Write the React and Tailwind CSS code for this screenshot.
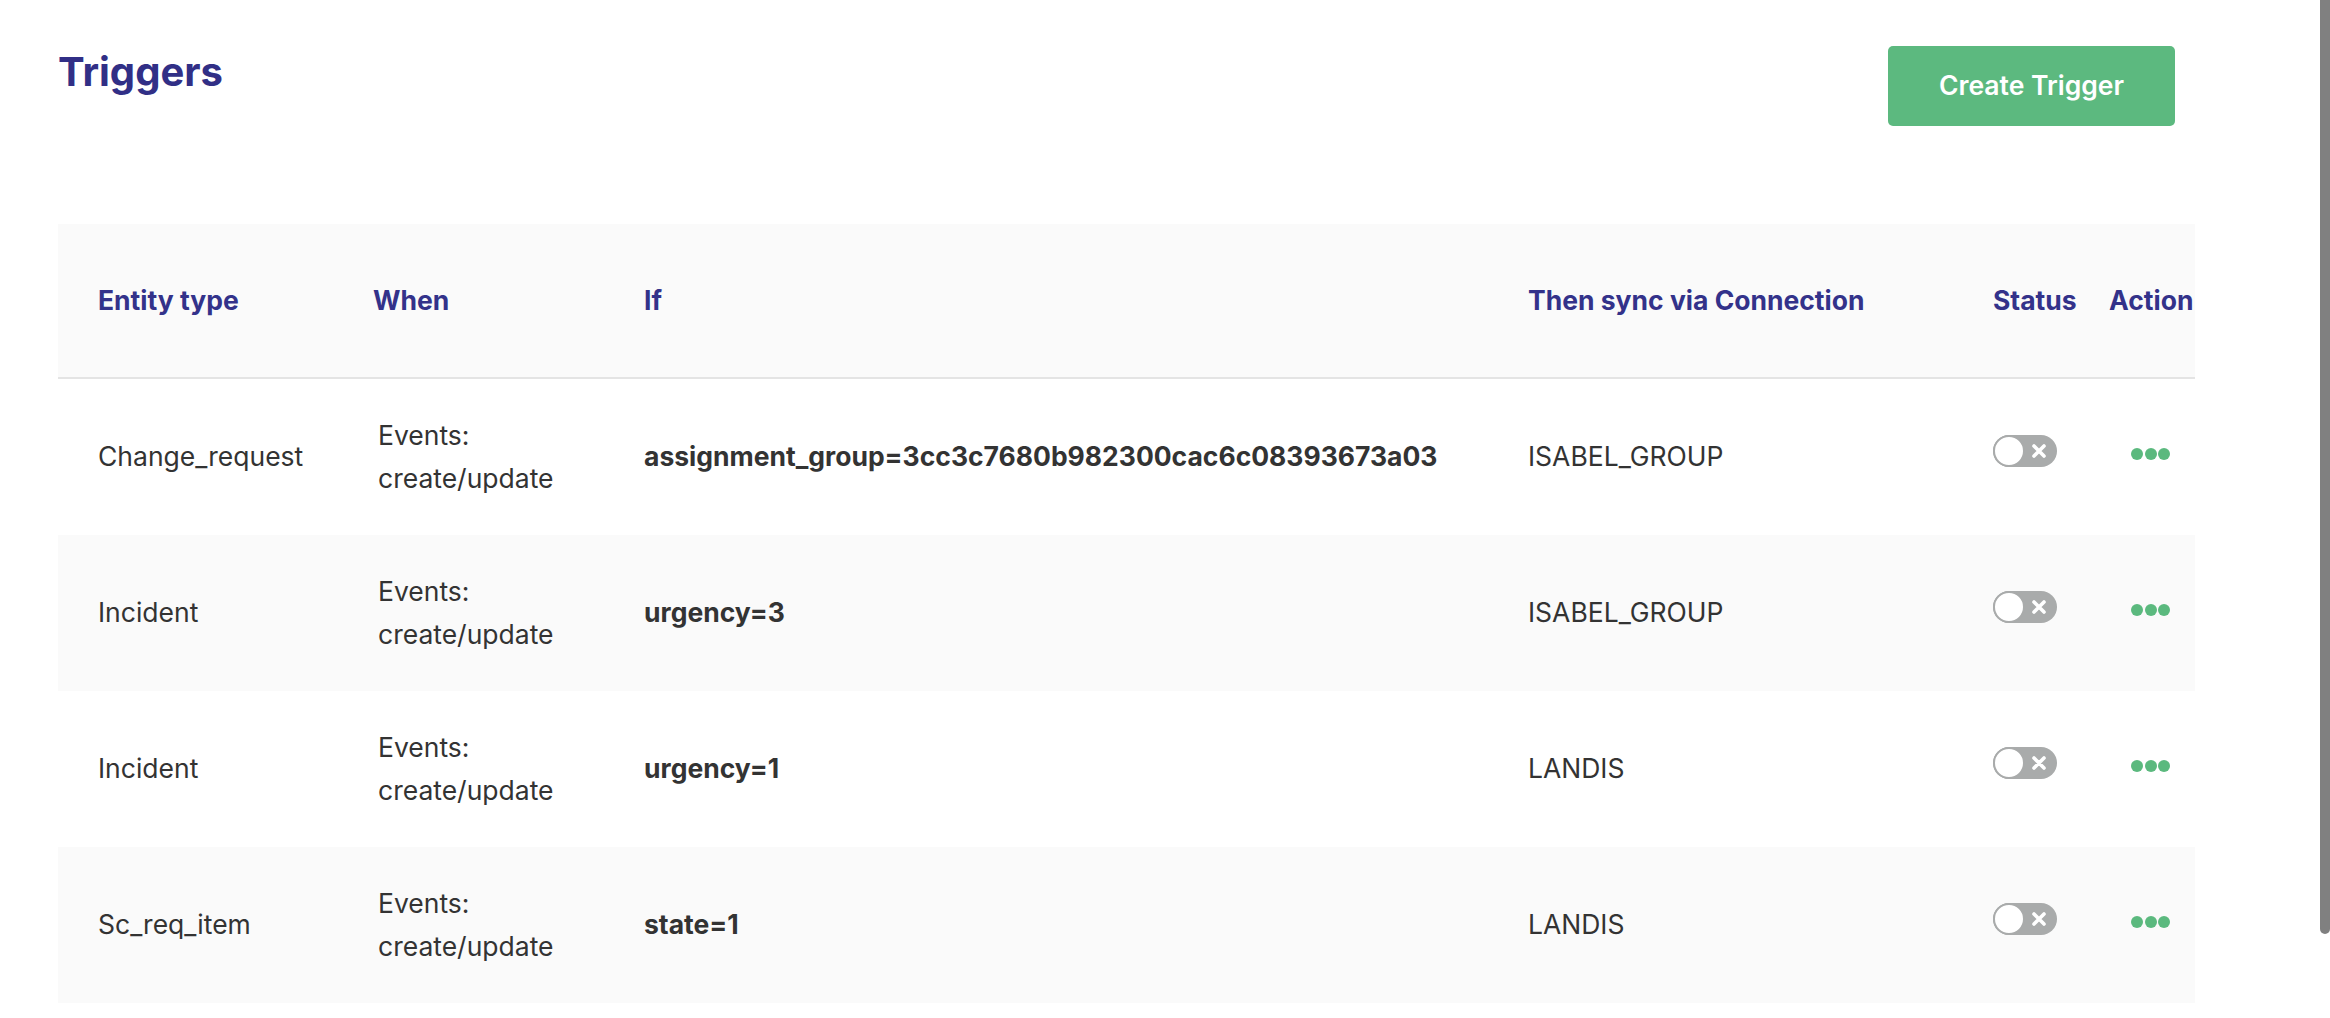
import React from "react";

const rows = [
  { entity: "Change_request", cond: "assignment_group=3cc3c7680b982300cac6c08393673a03", conn: "ISABEL_GROUP", bg: "bg-white" },
  { entity: "Incident", cond: "urgency=3", conn: "ISABEL_GROUP", bg: "bg-[#fafafa]" },
  { entity: "Incident", cond: "urgency=1", conn: "LANDIS", bg: "bg-white" },
  { entity: "Sc_req_item", cond: "state=1", conn: "LANDIS", bg: "bg-[#fafafa]" },
];

function Toggle() {
  return (
    <div className="relative w-[64px] h-[32px] rounded-full bg-[#a9abab] mb-[12px]">
      <div className="absolute left-0 top-0 w-[32px] h-[32px] rounded-full bg-white border-2 border-[#a9abab]" />
      <svg className="absolute left-[38px] top-[8px]" width="16" height="16" viewBox="0 0 16 16">
        <path d="M3 3 L13 13 M13 3 L3 13" stroke="white" strokeWidth="3.6" strokeLinecap="round" />
      </svg>
    </div>
  );
}

function Dots() {
  return (
    <div className="flex gap-[1.5px] ml-[22px] mb-[6px]">
      <span className="w-[12px] h-[12px] rounded-full bg-[#5bb97e]" />
      <span className="w-[12px] h-[12px] rounded-full bg-[#5bb97e]" />
      <span className="w-[12px] h-[12px] rounded-full bg-[#5bb97e]" />
    </div>
  );
}

const grid = "grid grid-cols-[277px_269px_884px_465px_116px_1fr] items-center pl-[40px]";

export default function App() {
  return (
    <div className="relative min-h-[1018px] bg-white font-['Inter',sans-serif] overflow-hidden">
      <div className="absolute right-0 top-0 w-[10px] h-[934px] bg-[#808080] rounded-b-full" />
      <div className="pl-[58px] pr-[135px]">
        <div className="flex justify-between items-start">
          <h1 className="mt-[52px] text-[40px] leading-none font-bold text-[#312f86]">Triggers</h1>
          <button className="mt-[46px] mr-[20px] w-[287px] h-[80px] rounded-[5px] bg-[#5cb97f] text-white text-[26.5px] font-semibold">
            Create Trigger
          </button>
        </div>
        <div className="mt-[98px] overflow-hidden">
          <div className={`${grid} h-[155px] bg-[#fafafa] border-b-2 border-[#e4e4e4] text-[26.5px] font-bold text-[#33328a] whitespace-nowrap`}>
            <div>Entity type</div>
            <div className="-ml-[2px]">When</div>
            <div>If</div>
            <div>Then sync via Connection</div>
            <div>Status</div>
            <div className="overflow-hidden">Action</div>
          </div>
          {rows.map((r, i) => (
            <div key={i} className={`${grid} h-[156px] ${r.bg} text-[26.5px] text-[#333333]`}>
              <div>{r.entity}</div>
              <div className="leading-[43px] ml-[3px]">
                <div>Events:</div>
                <div>create/update</div>
              </div>
              <div className="font-bold">{r.cond}</div>
              <div>{r.conn}</div>
              <div className="flex items-center">
                <Toggle />
              </div>
              <div className="flex items-center">
                <Dots />
              </div>
            </div>
          ))}
        </div>
      </div>
    </div>
  );
}
